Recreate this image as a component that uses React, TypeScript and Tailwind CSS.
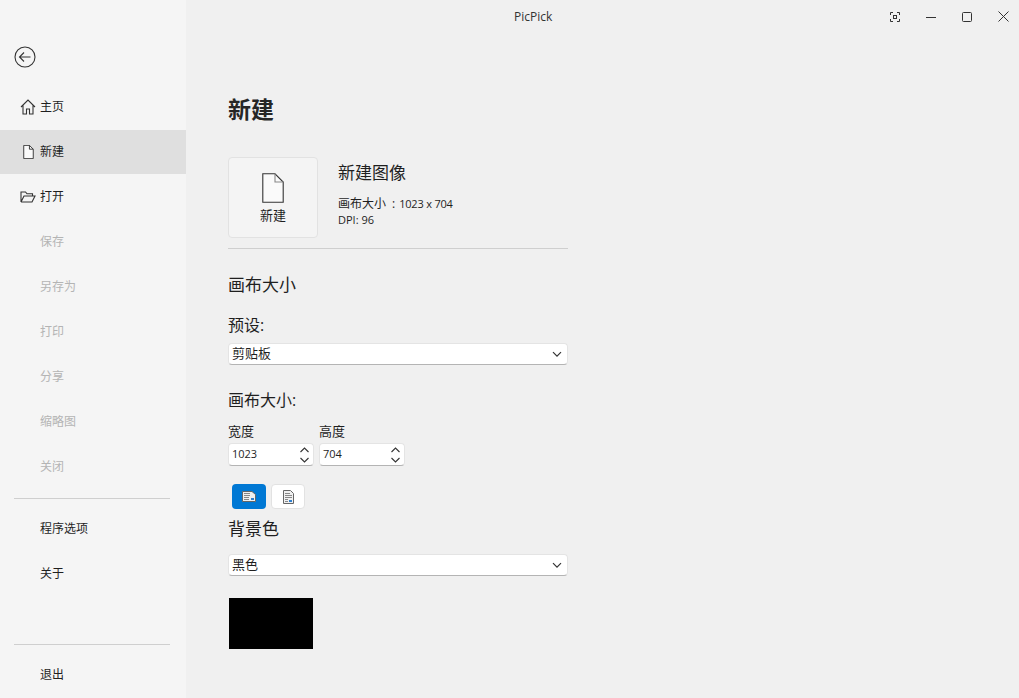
import React from "react";

const font = { fontFamily: '"Open Sans","Noto Sans CJK SC",sans-serif' };

function Chevron() {
  return (
    <svg width="10" height="7" viewBox="0 0 10 7" fill="none" stroke="#333" strokeWidth="1.2">
      <path d="M1 1.2 L5 5.2 L9 1.2" />
    </svg>
  );
}

function Page({ w, h, foldColor }: { w: number; h: number; foldColor: string }) {
  return (
    <svg width={w} height={h} viewBox="0 0 22 30" fill="none" stroke="#333" strokeWidth={w < 15 ? 2 : 1.1}>
      <path d="M0.8 0.8 H13 L21.2 9 V29.2 H0.8 Z" fill="#fafafa" />
      <path d="M13 0.8 V9 H21.2" stroke={foldColor} />
    </svg>
  );
}

function NavItem({ label, icon, active, disabled }: { label: string; icon?: React.ReactNode; active?: boolean; disabled?: boolean }) {
  return (
    <div className={`relative flex h-[44px] mb-px items-center pl-[40px] text-[12px] ${active ? "bg-[#dfdfdf]" : ""} ${disabled ? "text-[#b4b4b4]" : "text-[#1f1f1f]"}`}>
      {icon && <span className="absolute left-[20px] top-[14px] flex h-[16px] w-[16px] items-center justify-center">{icon}</span>}
      {label}
    </div>
  );
}

function Select({ value }: { value: string }) {
  return (
    <div className="flex h-[22px] w-[340px] items-center justify-between rounded-[4px] border border-[#e4e4e4] border-b-[#b4b4b4] bg-white pl-[3px] pr-[5px] text-[13px] text-[#1f1f1f]">
      <span>{value}</span>
      <Chevron />
    </div>
  );
}

function Spinner({ value, width }: { value: string; width: string }) {
  return (
    <div className={`flex h-[23px] ${width} items-center justify-between rounded-[4px] border border-[#e4e4e4] border-b-[#b4b4b4] bg-white pl-[3px] pr-[4px] text-[11px] text-[#1f1f1f]`}>
      <span>{value}</span>
      <span className="flex flex-col gap-[4px]">
        <svg width="9" height="6" viewBox="0 0 9 6" fill="none" stroke="#333" strokeWidth="1.1"><path d="M0.5 5 L4.5 1 L8.5 5" /></svg>
        <svg width="9" height="6" viewBox="0 0 9 6" fill="none" stroke="#333" strokeWidth="1.1"><path d="M0.5 1 L4.5 5 L8.5 1" /></svg>
      </span>
    </div>
  );
}

export default function App() {
  return (
    <div className="flex h-[698px] w-[1019px] overflow-hidden bg-[#f0f0f0]" style={font}>
      <aside className="flex h-full w-[186px] shrink-0 flex-col bg-[#f5f5f5]">
        <div className="pl-[14px] pt-[46px]">
          <svg width="22" height="22" viewBox="0 0 22 22" fill="none" stroke="#333" strokeWidth="1.1">
            <circle cx="11" cy="11" r="10" />
            <path d="M5.5 11 H16.5 M10 6.5 L5.5 11 L10 15.5" />
          </svg>
        </div>
        <nav className="mt-[17px]">
          <NavItem
            label="主页"
            icon={
              <svg width="16" height="16" viewBox="0 0 16 16" fill="none" stroke="#333" strokeWidth="1.1">
                <path d="M1 8 L8 1 L15 8 M3 6.5 V15 H6.5 V10 H9.5 V15 H13 V6.5" />
              </svg>
            }
          />
          <NavItem label="新建" active icon={<Page w={11} h={14} foldColor="#333" />} />
          <NavItem
            label="打开"
            icon={
              <svg width="16" height="12" viewBox="0 0 16 12" fill="none" stroke="#333" strokeWidth="1.1">
                <path d="M1 11 V1 H5.5 L7 2.8 H12.5 V5 M1 11 H12 L15 5 H4 L1 11" />
              </svg>
            }
          />
          <NavItem label="保存" disabled />
          <NavItem label="另存为" disabled />
          <NavItem label="打印" disabled />
          <NavItem label="分享" disabled />
          <NavItem label="缩略图" disabled />
          <NavItem label="关闭" disabled />
        </nav>
        <div className="ml-[14px] mr-[16px] mt-[8px] h-px bg-[#cfcfcf]" />
        <div className="mt-[8px]">
          <NavItem label="程序选项" />
          <NavItem label="关于" />
        </div>
        <div className="ml-[14px] mr-[16px] mt-[47px] h-px bg-[#cfcfcf]" />
        <div className="mt-[9px]">
          <NavItem label="退出" />
        </div>
      </aside>

      <main className="flex min-w-0 flex-1 flex-col">
        <header className="flex h-[33px] items-center pl-[136px] pr-[8px]">
          <span className="flex-1 pl-[192px] text-[12px] leading-none text-[#333]">PicPick</span>
          <div className="flex items-center gap-[20px]">
            <span className="flex h-[32px] w-[16px] items-center justify-center">
              <svg width="10" height="10" viewBox="0 0 10 10" fill="none" stroke="#333" strokeWidth="1">
                <path d="M0.5 3 V0.5 H3 M7 0.5 H9.5 V3 M9.5 7 V9.5 H7 M3 9.5 H0.5 V7" />
                <rect x="3.5" y="3.5" width="3" height="3" />
              </svg>
            </span>
            <span className="flex h-[32px] w-[16px] items-center justify-center">
              <svg width="10" height="10" viewBox="0 0 10 10" stroke="#333" strokeWidth="1"><path d="M0 5.5 H10" /></svg>
            </span>
            <span className="flex h-[32px] w-[16px] items-center justify-center">
              <svg width="10" height="10" viewBox="0 0 10 10" fill="none" stroke="#333" strokeWidth="1"><rect x="0.5" y="0.5" width="9" height="9" rx="1" /></svg>
            </span>
            <span className="flex h-[32px] w-[16px] items-center justify-center">
              <svg width="11" height="11" viewBox="0 0 11 11" stroke="#333" strokeWidth="1"><path d="M0.5 0.5 L10.5 10.5 M10.5 0.5 L0.5 10.5" /></svg>
            </span>
          </div>
        </header>

        <div className="flex w-[382px] flex-col pl-[42px]">
          <h1 className="mt-[60px] text-[23px] font-bold leading-[32px] text-[#262626]">新建</h1>

          <div className="mt-[32px] flex">
            <div className="flex h-[81px] w-[90px] flex-col items-center rounded-[4px] border border-[#e2e2e2] bg-[#f4f4f4] pt-[15px]">
              <Page w={22} h={30} foldColor="#888" />
              <span className="mt-[3px] text-[13px] leading-[18px] text-[#1f1f1f]">新建</span>
            </div>
            <div className="ml-[20px] flex flex-col text-[#1f1f1f]">
              <span className="mt-[4px] text-[17px] leading-[24px]">新建图像</span>
              <span className="mt-[11px] text-[12px] leading-[16px]">
                画布大小<span className="ml-[6px]">:</span>
                <span className="ml-[4px] text-[11px] tracking-[-0.2px]">1023 x 704</span>
              </span>
              <span className="text-[11px] leading-[16px]">DPI: 96</span>
            </div>
          </div>

          <div className="mt-[10px] h-px w-[340px] bg-[#cfcfcf]" />

          <div className="mt-[24px] text-[17px] leading-[24px] text-[#1f1f1f]">画布大小</div>
          <div className="mt-[18px] text-[16px] leading-[20px] text-[#1f1f1f]">预设:</div>
          <div className="mt-[8px]"><Select value="剪贴板" /></div>

          <div className="mt-[25px] text-[16px] leading-[20px] text-[#1f1f1f]">画布大小:</div>
          <div className="mt-[12px] flex gap-[5px]">
            <div className="flex flex-col">
              <span className="text-[13px] leading-[18px] text-[#1f1f1f]">宽度</span>
              <span className="mt-[3px]"><Spinner value="1023" width="w-[86px]" /></span>
            </div>
            <div className="flex flex-col">
              <span className="text-[13px] leading-[18px] text-[#1f1f1f]">高度</span>
              <span className="mt-[3px]"><Spinner value="704" width="w-[86px]" /></span>
            </div>
          </div>

          <div className="mt-[18px] flex gap-[5px] pl-[4px]">
            <div className="flex h-[25px] w-[34px] items-center justify-center rounded-[4px] bg-[#0078d4]">
              <svg width="14" height="11" viewBox="0 0 14 11">
                <path d="M0.5 0.5 H10 L13.5 3.5 V10.5 H0.5 Z" fill="#f0f0f0" stroke="#666" />
                <path d="M2 2.5 H8 M2 4.5 H8 M2 6.5 H7 M2 8.5 H7" stroke="#888" />
                <rect x="9" y="7" width="3" height="2" fill="#2f80d0" />
              </svg>
            </div>
            <div className="flex h-[25px] w-[34px] items-center justify-center rounded-[4px] border border-[#e2e2e2] bg-white">
              <svg width="11" height="14" viewBox="0 0 11 14">
                <path d="M0.5 0.5 H7.5 L10.5 3.5 V13.5 H0.5 Z" fill="#f0f0f0" stroke="#666" />
                <path d="M2 3.5 H7 M2 5.5 H9 M2 7.5 H9 M2 9.5 H5 M2 11.5 H5" stroke="#888" />
                <rect x="6" y="10" width="3" height="2" fill="#2f80d0" />
              </svg>
            </div>
          </div>

          <div className="mt-[8px] text-[17px] leading-[24px] text-[#1f1f1f]">背景色</div>
          <div className="mt-[13px]"><Select value="黑色" /></div>
          <div className="ml-px mt-[22px] h-[51px] w-[84px] bg-black" />
        </div>
      </main>
    </div>
  );
}
